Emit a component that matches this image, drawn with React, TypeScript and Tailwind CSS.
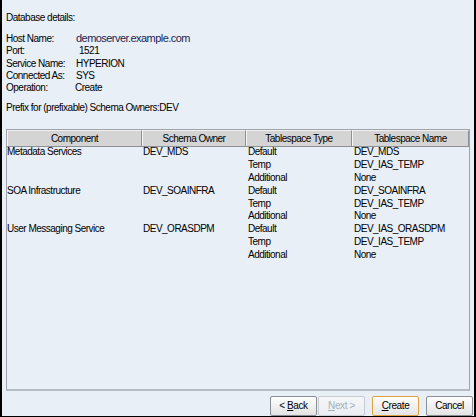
import React from "react";

const rows = [
  { component: "Metadata Services", owner: "DEV_MDS", spaces: [["Default", "DEV_MDS"], ["Temp", "DEV_IAS_TEMP"], ["Additional", "None"]] },
  { component: "SOA Infrastructure", owner: "DEV_SOAINFRA", spaces: [["Default", "DEV_SOAINFRA"], ["Temp", "DEV_IAS_TEMP"], ["Additional", "None"]] },
  { component: "User Messaging Service", owner: "DEV_ORASDPM", spaces: [["Default", "DEV_IAS_ORASDPM"], ["Temp", "DEV_IAS_TEMP"], ["Additional", "None"]] },
];

const details = [
  ["Host Name:", "demoserver.example.com"],
  ["Port:", "1521"],
  ["Service Name:", "HYPERION"],
  ["Connected As:", "SYS"],
  ["Operation:", "Create"],
];

const Btn = ({ children, disabled, focus }: { children: React.ReactNode; disabled?: boolean; focus?: boolean }) => (
  <button
    className={
      "h-[20px] w-[47px] rounded-[2px] border text-[10px] tracking-[-0.4px] leading-none bg-gradient-to-b " +
      (disabled
        ? "border-[#c8ccd0] text-[#a8b0b8] from-[#f4f6f8] to-[#eceff2]"
        : focus
        ? "border-[#e0a040] text-black from-[#ffffff] to-[#e4e4e4]"
        : "border-[#8a8f95] text-black from-[#ffffff] to-[#e4e4e4]")
    }
  >
    {children}
  </button>
);

export default function App() {
  return (
    <div
      className="w-[476px] h-[417px] bg-[#e8eff7] border-x-2 border-b border-black flex flex-col text-[10px] tracking-[-0.5px] text-black"
      style={{ fontFamily: '"Liberation Sans", Arial, sans-serif' }}
    >
      <div className="pl-[4px] pt-[12px]">
        <div className="leading-[12px]">Database details:</div>
        <div className="mt-[9px] flex flex-col">
          {details.map(([k, v], i) => (
            <div key={k} className="flex h-[12.3px] leading-[12px] whitespace-nowrap">
              <span className="w-[70px] shrink-0">{k}</span>
              <span
                className={
                  i === 0
                    ? "text-[11px] tracking-[-0.55px] text-[#1c2550] -mt-[1px]"
                    : i === 1
                    ? "pl-[3px]"
                    : i === 4
                    ? "-ml-[1px]"
                    : ""
                }
              >
                {v}
              </span>
            </div>
          ))}
        </div>
        <div className="mt-[8px] leading-[12px]">Prefix for (prefixable) Schema Owners:DEV</div>
      </div>

      <div className="mx-[4px] mt-[15px] h-[262px] border border-[#a0a4a8] border-b-2 border-b-[#b4bcc4] bg-[#e8eff7]">
        <div className="grid grid-cols-[135px_104px_106px_1fr] h-[17px] border-b border-[#8c9096]">
          {["Component", "Schema Owner", "Tablespace Type", "Tablespace Name"].map((h) => (
            <div
              key={h}
              className="flex items-center justify-center bg-[#d4d4d4] border-t border-[#f0f0f0] border-r border-r-[#8c9096] border-l border-l-[#f4f4f4]"
            >
              {h}
            </div>
          ))}
        </div>
        <div className="-mt-[2px]">
          {rows.map((r) => (
            <div key={r.component} className="grid grid-cols-[135px_104px_106px_1fr]">
              <div className="leading-[13px]">{r.component}</div>
              <div className="leading-[13px] pl-[1px]">{r.owner}</div>
              <div className="flex flex-col pl-[2px]">
                {r.spaces.map(([t]) => (
                  <div key={t} className="h-[12.8px] leading-[13px]">{t}</div>
                ))}
              </div>
              <div className="flex flex-col pl-[2px]">
                {r.spaces.map(([t, n]) => (
                  <div key={t} className="h-[12.8px] leading-[13px]">{n}</div>
                ))}
              </div>
            </div>
          ))}
        </div>
      </div>

      <div className="mt-auto flex justify-end pr-[1px]">
        <div className="flex gap-[1px]">
          <Btn>&lt; <u>B</u>ack</Btn>
          <Btn disabled><u>N</u>ext &gt;</Btn>
        </div>
        <div className="ml-[7px]">
          <Btn focus><u>C</u>reate</Btn>
        </div>
        <div className="ml-[7px]">
          <Btn>Cancel</Btn>
        </div>
      </div>
    </div>
  );
}
